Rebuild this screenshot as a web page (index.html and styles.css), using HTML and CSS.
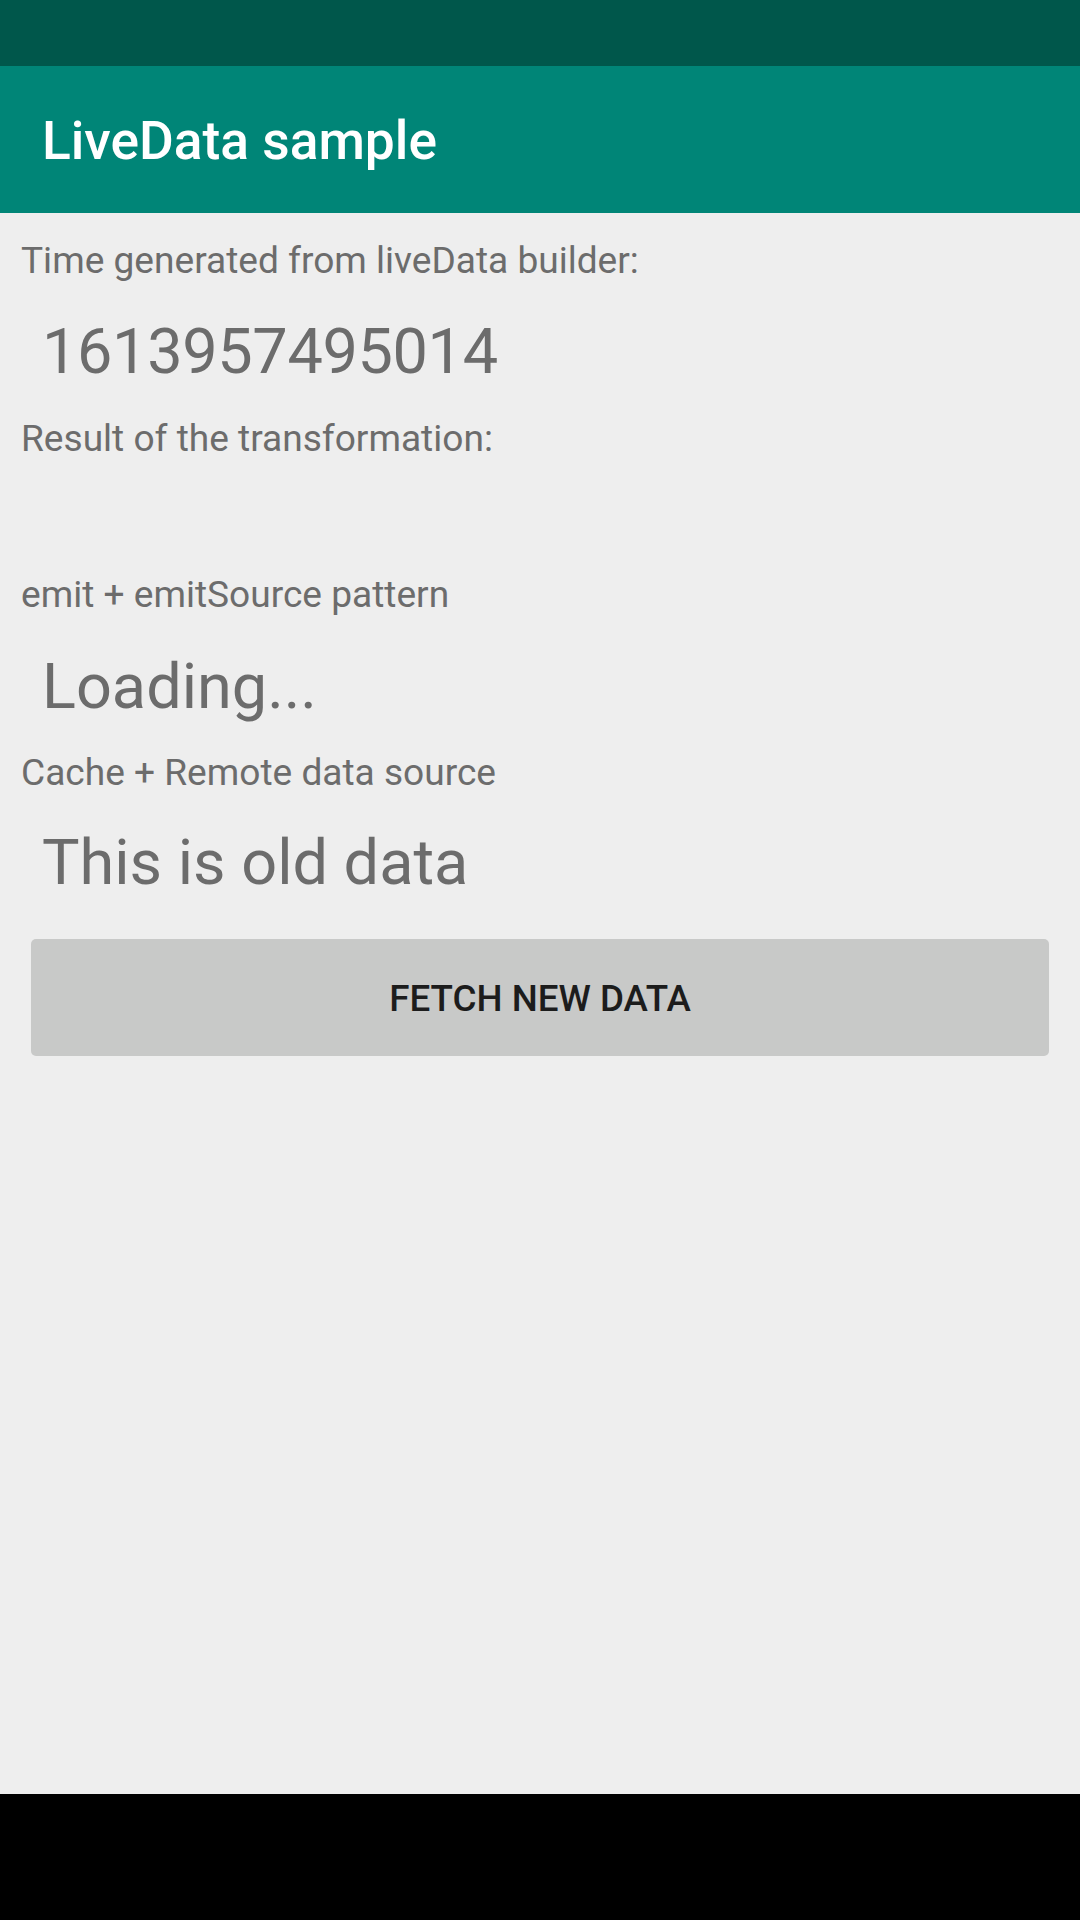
FILE: index.html
```html
<!DOCTYPE html>
<html>
<head>
<meta charset="utf-8">
<link rel="stylesheet" href="styles.css">
</head>
<body>
<div class="screen">
  <div class="status-bar"></div>
  <div class="app-bar"><span class="title">LiveData sample</span></div>
  <div class="content">
    <div class="label first">Time generated from liveData builder:</div>
    <div class="value digits">1613957495014</div>
    <div class="label">Result of the transformation:</div>
    <div class="label gap-large">emit + emitSource pattern</div>
    <div class="value v3">Loading...</div>
    <div class="label l4">Cache + Remote data source</div>
    <div class="value">This is old data</div>
    <button class="fetch-btn">FETCH NEW DATA</button>
  </div>
  <div class="nav-bar"></div>
</div>
</body>
</html>
```
FILE: styles.css
```css
html, body {
  margin: 0;
  padding: 0;
}
body {
  background: #eeeeee;
  font-family: Roboto, "Noto Sans", sans-serif;
}
.screen {
  width: 1080px;
  height: 1920px;
  display: flex;
  flex-direction: column;
  overflow: hidden;
}
.status-bar {
  height: 66px;
  background: #00574b;
  flex: none;
}
.app-bar {
  height: 147px;
  background: #008577;
  flex: none;
  display: flex;
  align-items: center;
  padding-left: 42px;
}
.title {
  color: #ffffff;
  font-size: 53.3px;
  font-weight: 500;
  line-height: 60px;
  padding-top: 2px;
}
.content {
  flex: 1;
  display: flex;
  flex-direction: column;
  padding-top: 24px;
}
.label {
  color: #6c6c6c;
  font-size: 37.1px;
  line-height: 48px;
  padding-left: 21px;
  margin-top: 23px;
}
.label.first {
  margin-top: 0;
}
.label.gap-large {
  margin-top: 108px;
}
.label.l4 {
  margin-top: 22px;
}
.value {
  color: #6c6c6c;
  font-size: 63px;
  line-height: 80px;
  padding-left: 42px;
  margin-top: 27px;
}
.value.digits {
  letter-spacing: -0.35px;
}
.value.v3 {
  margin-top: 28px;
}
.label + .value:last-of-type {
  margin-top: 26px;
}
.fetch-btn {
  margin: 36px 31px 0 31px;
  height: 117px;
  padding: 3px 0 0 0;
  border: none;
  border-radius: 5px;
  background: #c8c9c8;
  color: #1c1c1c;
  font-family: Roboto, "Noto Sans", sans-serif;
  font-size: 36.75px;
  font-weight: 500;
  line-height: 60px;
  text-align: center;
}
.nav-bar {
  height: 126px;
  background: #000000;
  flex: none;
}
```
